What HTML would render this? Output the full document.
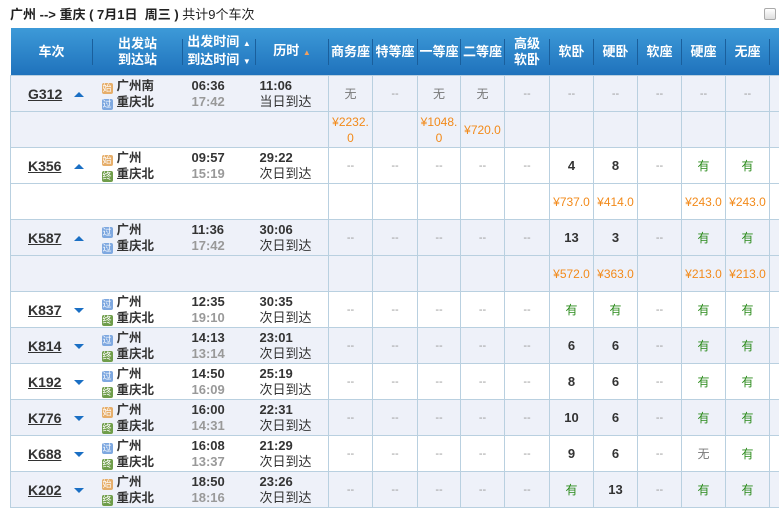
<!DOCTYPE html>
<html><head><meta charset="utf-8"><style>
body{margin:0;width:779px;height:517px;overflow:hidden;background:#fff;font-family:"Liberation Sans","Noto Sans CJK SC",sans-serif;font-size:12px;color:#333}
.title{position:absolute;left:10px;top:4px;font-size:13px;font-weight:bold;color:#222;white-space:nowrap}
.title span{font-weight:normal}
.cb{position:absolute;left:764px;top:8px;width:10px;height:10px;border:1px solid #aaa;border-radius:2px;background:linear-gradient(#fff,#ddd)}
table{position:absolute;left:10px;top:28px;border-collapse:collapse;table-layout:fixed;width:803px}
th{height:47px;background:linear-gradient(#3d9ad8,#1f72bc);color:#fff;font-size:13px;font-weight:bold;padding:0;position:relative;line-height:16px}
th:after{content:"";position:absolute;right:0;top:11px;height:26px;border-right:1px solid #1a5f9c}
th:last-child:after{display:none}
td{height:35px;border:1px solid #b9d0e0;text-align:center;padding:0;vertical-align:middle}
td:nth-child(1){border-right:none}
td:nth-child(2),td:nth-child(3){border-left:none;border-right:none}
td:nth-child(4){border-left:none}
tr.b td{background:#eef1f9}
td.tr{text-align:left;padding-left:17px;font-size:14px;font-weight:bold;color:#333}
td.tr u{display:inline-block;width:40px}
.up,.dn{display:inline-block;width:0;height:0;border-left:5px solid transparent;border-right:5px solid transparent;margin-left:6px;vertical-align:middle}
.up{border-bottom:5px solid #1a6fc4}.dn{border-top:5px solid #1a6fc4}
.st{text-align:left;padding-left:9px;font-weight:bold;font-size:12.5px;line-height:16px;color:#333}
.ic{display:inline-block;width:11px;height:11px;font-size:9px;line-height:11px;text-align:center;color:#fff;border-radius:2px;margin-right:4px;vertical-align:-1px;font-weight:normal}
.s{background:#e6ae6a}.g{background:#7ea8e0}.z{background:#6f9d4a}
.tm{text-align:left;padding-left:9px;font-weight:bold;font-size:13px;line-height:16px}
.tm i{font-style:normal;color:#999}
.du{text-align:left;padding-left:4px;font-size:13px;line-height:16px}
.du b{display:block}
.n{color:#999;font-size:11px}
.w{color:#777}
.y{color:#2a8a1a}
.num{font-weight:bold;font-size:13px}
.p{color:#f28a1a;font-size:12px;line-height:16px}
</style></head><body>
<div class="title">广州 --&gt; 重庆 ( 7月1日&nbsp; 周三 ) <span>共计9个车次</span></div>
<div class="cb"></div>
<table>
<colgroup><col style="width:82px"><col style="width:90px"><col style="width:73px"><col style="width:73px"><col style="width:44px"><col style="width:45px"><col style="width:43px"><col style="width:44px"><col style="width:45px"><col style="width:44px"><col style="width:44px"><col style="width:44px"><col style="width:44px"><col style="width:44px"><col style="width:44px"></colgroup>
<tr><th>车次</th><th>出发站<br>到达站</th><th>出发时间 <span style="font-size:8px">▲</span><br>到达时间 <span style="font-size:8px">▼</span></th><th>历时 <span style="font-size:8px;color:#f0a060">▲</span></th><th>商务座</th><th>特等座</th><th>一等座</th><th>二等座</th><th>高级<br>软卧</th><th>软卧</th><th>硬卧</th><th>软座</th><th>硬座</th><th>无座</th><th>其他</th></tr>

<tr class="b"><td class="tr"><u>G312</u><span class="up"></span></td><td class="st"><span class="ic s">始</span>广州南<br><span class="ic g">过</span>重庆北</td><td class="tm">06:36<br><i>17:42</i></td><td class="du"><b>11:06</b>当日到达</td><td class="w">无</td><td class="n">--</td><td class="w">无</td><td class="w">无</td><td class="n">--</td><td class="n">--</td><td class="n">--</td><td class="n">--</td><td class="n">--</td><td class="n">--</td><td class="n">--</td></tr>
<tr class="b"><td></td><td></td><td></td><td></td><td class="p">¥2232.<br>0</td><td></td><td class="p">¥1048.<br>0</td><td class="p">¥720.0</td><td></td><td></td><td></td><td></td><td></td><td></td><td></td></tr>

<tr><td class="tr"><u>K356</u><span class="up"></span></td><td class="st"><span class="ic s">始</span>广州<br><span class="ic z">终</span>重庆北</td><td class="tm">09:57<br><i>15:19</i></td><td class="du"><b>29:22</b>次日到达</td><td class="n">--</td><td class="n">--</td><td class="n">--</td><td class="n">--</td><td class="n">--</td><td class="num">4</td><td class="num">8</td><td class="n">--</td><td class="y">有</td><td class="y">有</td><td class="n">--</td></tr>
<tr><td></td><td></td><td></td><td></td><td></td><td></td><td></td><td></td><td></td><td class="p">¥737.0</td><td class="p">¥414.0</td><td></td><td class="p">¥243.0</td><td class="p">¥243.0</td><td></td></tr>

<tr class="b"><td class="tr"><u>K587</u><span class="up"></span></td><td class="st"><span class="ic g">过</span>广州<br><span class="ic g">过</span>重庆北</td><td class="tm">11:36<br><i>17:42</i></td><td class="du"><b>30:06</b>次日到达</td><td class="n">--</td><td class="n">--</td><td class="n">--</td><td class="n">--</td><td class="n">--</td><td class="num">13</td><td class="num">3</td><td class="n">--</td><td class="y">有</td><td class="y">有</td><td class="n">--</td></tr>
<tr class="b"><td></td><td></td><td></td><td></td><td></td><td></td><td></td><td></td><td></td><td class="p">¥572.0</td><td class="p">¥363.0</td><td></td><td class="p">¥213.0</td><td class="p">¥213.0</td><td></td></tr>

<tr><td class="tr"><u>K837</u><span class="dn"></span></td><td class="st"><span class="ic g">过</span>广州<br><span class="ic z">终</span>重庆北</td><td class="tm">12:35<br><i>19:10</i></td><td class="du"><b>30:35</b>次日到达</td><td class="n">--</td><td class="n">--</td><td class="n">--</td><td class="n">--</td><td class="n">--</td><td class="y">有</td><td class="y">有</td><td class="n">--</td><td class="y">有</td><td class="y">有</td><td class="n">--</td></tr>

<tr class="b"><td class="tr"><u>K814</u><span class="dn"></span></td><td class="st"><span class="ic g">过</span>广州<br><span class="ic z">终</span>重庆北</td><td class="tm">14:13<br><i>13:14</i></td><td class="du"><b>23:01</b>次日到达</td><td class="n">--</td><td class="n">--</td><td class="n">--</td><td class="n">--</td><td class="n">--</td><td class="num">6</td><td class="num">6</td><td class="n">--</td><td class="y">有</td><td class="y">有</td><td class="n">--</td></tr>

<tr><td class="tr"><u>K192</u><span class="dn"></span></td><td class="st"><span class="ic g">过</span>广州<br><span class="ic z">终</span>重庆北</td><td class="tm">14:50<br><i>16:09</i></td><td class="du"><b>25:19</b>次日到达</td><td class="n">--</td><td class="n">--</td><td class="n">--</td><td class="n">--</td><td class="n">--</td><td class="num">8</td><td class="num">6</td><td class="n">--</td><td class="y">有</td><td class="y">有</td><td class="n">--</td></tr>

<tr class="b"><td class="tr"><u>K776</u><span class="dn"></span></td><td class="st"><span class="ic s">始</span>广州<br><span class="ic z">终</span>重庆北</td><td class="tm">16:00<br><i>14:31</i></td><td class="du"><b>22:31</b>次日到达</td><td class="n">--</td><td class="n">--</td><td class="n">--</td><td class="n">--</td><td class="n">--</td><td class="num">10</td><td class="num">6</td><td class="n">--</td><td class="y">有</td><td class="y">有</td><td class="n">--</td></tr>

<tr><td class="tr"><u>K688</u><span class="dn"></span></td><td class="st"><span class="ic g">过</span>广州<br><span class="ic z">终</span>重庆北</td><td class="tm">16:08<br><i>13:37</i></td><td class="du"><b>21:29</b>次日到达</td><td class="n">--</td><td class="n">--</td><td class="n">--</td><td class="n">--</td><td class="n">--</td><td class="num">9</td><td class="num">6</td><td class="n">--</td><td class="w">无</td><td class="y">有</td><td class="n">--</td></tr>

<tr class="b"><td class="tr"><u>K202</u><span class="dn"></span></td><td class="st"><span class="ic s">始</span>广州<br><span class="ic z">终</span>重庆北</td><td class="tm">18:50<br><i>18:16</i></td><td class="du"><b>23:26</b>次日到达</td><td class="n">--</td><td class="n">--</td><td class="n">--</td><td class="n">--</td><td class="n">--</td><td class="y">有</td><td class="num">13</td><td class="n">--</td><td class="y">有</td><td class="y">有</td><td class="n">--</td></tr>
</table>
</body></html>
